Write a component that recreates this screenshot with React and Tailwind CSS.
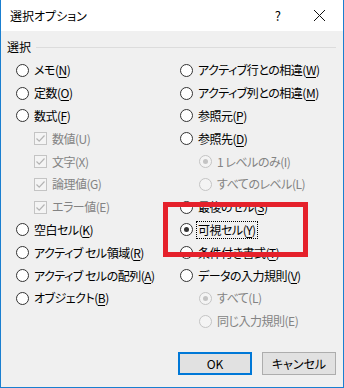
const Radio = ({ checked, disabled }) => (
  <span
    className={`flex h-[13px] w-[13px] shrink-0 items-center justify-center rounded-full border ${
      disabled ? 'border-[#c4c4c4] bg-[#f4f4f4]' : 'border-[#333333] bg-white'
    }`}
  >
    {checked && (
      <span className={`h-[5px] w-[5px] rounded-full ${disabled ? 'bg-[#c4c4c4]' : 'bg-[#333333]'}`} />
    )}
  </span>
)

const Check = () => (
  <span className="flex h-[13px] w-[13px] shrink-0 items-center justify-center border border-[#c4c4c4] bg-[#f4f4f4]">
    <svg width="11" height="11" viewBox="0 0 11 11">
      <path d="M1.5 5.5 L4.2 8.2 L9.5 2.5" fill="none" stroke="#b4b4b4" strokeWidth="1.2" />
    </svg>
  </span>
)

const Label = ({ text, k, disabled, focus }) => (
  <span
    className={`whitespace-nowrap px-[1px] leading-[16px] tracking-[-0.5px] ${disabled ? 'text-[#838383]' : 'text-black'} ${
      focus ? 'outline-1 outline-dotted outline-black' : ''
    }`}
  >
    {text}(<span className={disabled ? '' : 'underline underline-offset-2'}>{k}</span>)
  </span>
)

const Row = ({ type, indent, checked, disabled, text, k, focus }) => (
  <div className={`flex h-[22.8px] items-center gap-[4px] ${indent}`}>
    {type === 'check' ? <Check /> : <Radio checked={checked} disabled={disabled} />}
    <Label text={text} k={k} disabled={disabled} focus={focus} />
  </div>
)

const left = [
  { text: 'メモ', k: 'N' },
  { text: '定数', k: 'O' },
  { text: '数式', k: 'F' },
  { type: 'check', indent: 'pl-[18px]', disabled: true, text: '数値', k: 'U' },
  { type: 'check', indent: 'pl-[18px]', disabled: true, text: '文字', k: 'X' },
  { type: 'check', indent: 'pl-[18px]', disabled: true, text: '論理値', k: 'G' },
  { type: 'check', indent: 'pl-[18px]', disabled: true, text: 'エラー値', k: 'E' },
  { text: '空白セル', k: 'K' },
  { text: 'アクティブ セル領域', k: 'R' },
  { text: 'アクティブ セルの配列', k: 'A' },
  { text: 'オブジェクト', k: 'B' },
]

const right = [
  { text: 'アクティブ行との相違', k: 'W' },
  { text: 'アクティブ列との相違', k: 'M' },
  { text: '参照元', k: 'P' },
  { text: '参照先', k: 'D' },
  { indent: 'pl-[19px]', checked: true, disabled: true, text: '1 レベルのみ', k: 'I' },
  { indent: 'pl-[19px]', disabled: true, text: 'すべてのレベル', k: 'L' },
  { text: '最後のセル', k: 'S' },
  { checked: true, focus: true, text: '可視セル', k: 'Y' },
  { text: '条件付き書式', k: 'T' },
  { text: 'データの入力規則', k: 'V' },
  { indent: 'pl-[19px]', checked: true, disabled: true, text: 'すべて', k: 'L' },
  { indent: 'pl-[19px]', disabled: true, text: '同じ入力規則', k: 'E' },
]

export default function App() {
  return (
    <div className="relative flex h-[388px] w-[344px] flex-col border-x border-b border-[#1a7fd0] bg-[#f0f0f0] font-['Noto_Sans_CJK_JP',sans-serif] text-[12px] [font-feature-settings:'palt']">
      <div className="flex h-[31px] items-center bg-white pl-[9px] pr-[17px]">
        <span className="flex-1 text-[12px]">選択オプション</span>
        <span className="mr-[32px] text-[13px]">?</span>
        <svg width="13" height="13" viewBox="0 0 13 13">
          <path d="M1 1 L12 12 M12 1 L1 12" stroke="#111" strokeWidth="1" />
        </svg>
      </div>

      <div className="flex items-center gap-[5px] pl-[6px] pr-[7px] pt-[7px]">
        <span>選択</span>
        <span className="h-px flex-1 bg-[#dcdcdc]" />
      </div>

      <div className="mt-[3px] grid grid-cols-[164px_1fr] pl-[15px]">
        <div className="flex flex-col">
          {left.map((r, i) => (
            <Row key={i} {...r} />
          ))}
        </div>
        <div className="flex flex-col">
          {right.map((r, i) => (
            <Row key={i} {...r} />
          ))}
        </div>
      </div>

      <div className="mt-auto flex justify-end gap-[10px] pb-[12px] pr-[7px]">
        <button className="h-[23px] w-[74px] border-2 border-[#0078d7] bg-[#e1e1e1] text-[12px]">OK</button>
        <button className="h-[23px] w-[74px] border border-[#adadad] bg-[#e1e1e1] text-[12px]">キャンセル</button>
      </div>

      <div className="absolute left-[162px] top-[202px] h-[55px] w-[145px] border-[5px] border-[#e5212b]" />
    </div>
  )
}
